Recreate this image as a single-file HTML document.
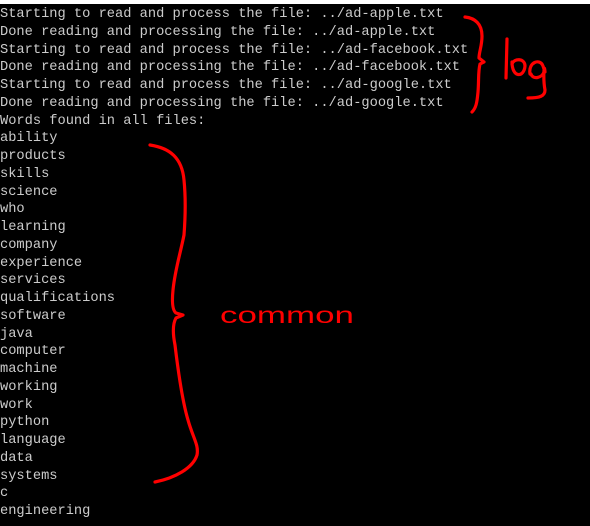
<!DOCTYPE html>
<html><head><meta charset="utf-8"><style>
html,body{margin:0;padding:0;}
body{width:590px;height:526px;background:#000;position:relative;overflow:hidden;}
.top{position:absolute;left:0;top:0;width:590px;height:4px;background:#fff;}
pre{position:absolute;left:0;top:6px;margin:0;font-family:"Liberation Mono",monospace;font-size:13.7px;line-height:17.75px;color:#cccccc;}
svg{position:absolute;left:0;top:0;}
</style></head><body>
<div class="top"></div>
<pre>Starting to read and process the file: ../ad-apple.txt
Done reading and processing the file: ../ad-apple.txt
Starting to read and process the file: ../ad-facebook.txt
Done reading and processing the file: ../ad-facebook.txt
Starting to read and process the file: ../ad-google.txt
Done reading and processing the file: ../ad-google.txt
Words found in all files:
ability
products
skills
science
who
learning
company
experience
services
qualifications
software
java
computer
machine
working
work
python
language
data
systems
c
engineering</pre>
<svg width="590" height="526" viewBox="0 0 590 526">
<g fill="none" stroke="#ff0000" stroke-width="3.2" stroke-linecap="round" stroke-linejoin="round">
<path d="M465 17 C475 18 482 24 482 36 C482 46 479 52 479 58 L484 62 L480 64 C478 72 479 80 478 92 C477 103 476 108 472 112"/>
<path d="M150 145 C170 148 182 158 184 180 C186 200 185 222 184 235 C180 255 175 270 173 290 C172 300 172 310 176 313 L183 315 L176 318 C172 325 173 335 175 345 C178 370 182 400 188 420 C193 438 199 445 197 455 C193 468 175 478 155 482"/>
<path d="M507 39 L506 78 M512 62 C512 78 524 78 525 66 C525 58 514 58 512 64 M530 74 C528 62 540 58 543 66 L545 72 C544 60 543 80 545 90 C545 96 540 98 528 98 M531 74 C533 80 542 78 544 72"/>
</g>
<text x="220" y="323" fill="#ff0000" font-family="Liberation Sans, sans-serif" font-size="23" textLength="134" lengthAdjust="spacingAndGlyphs">common</text>
</svg>
</body></html>
